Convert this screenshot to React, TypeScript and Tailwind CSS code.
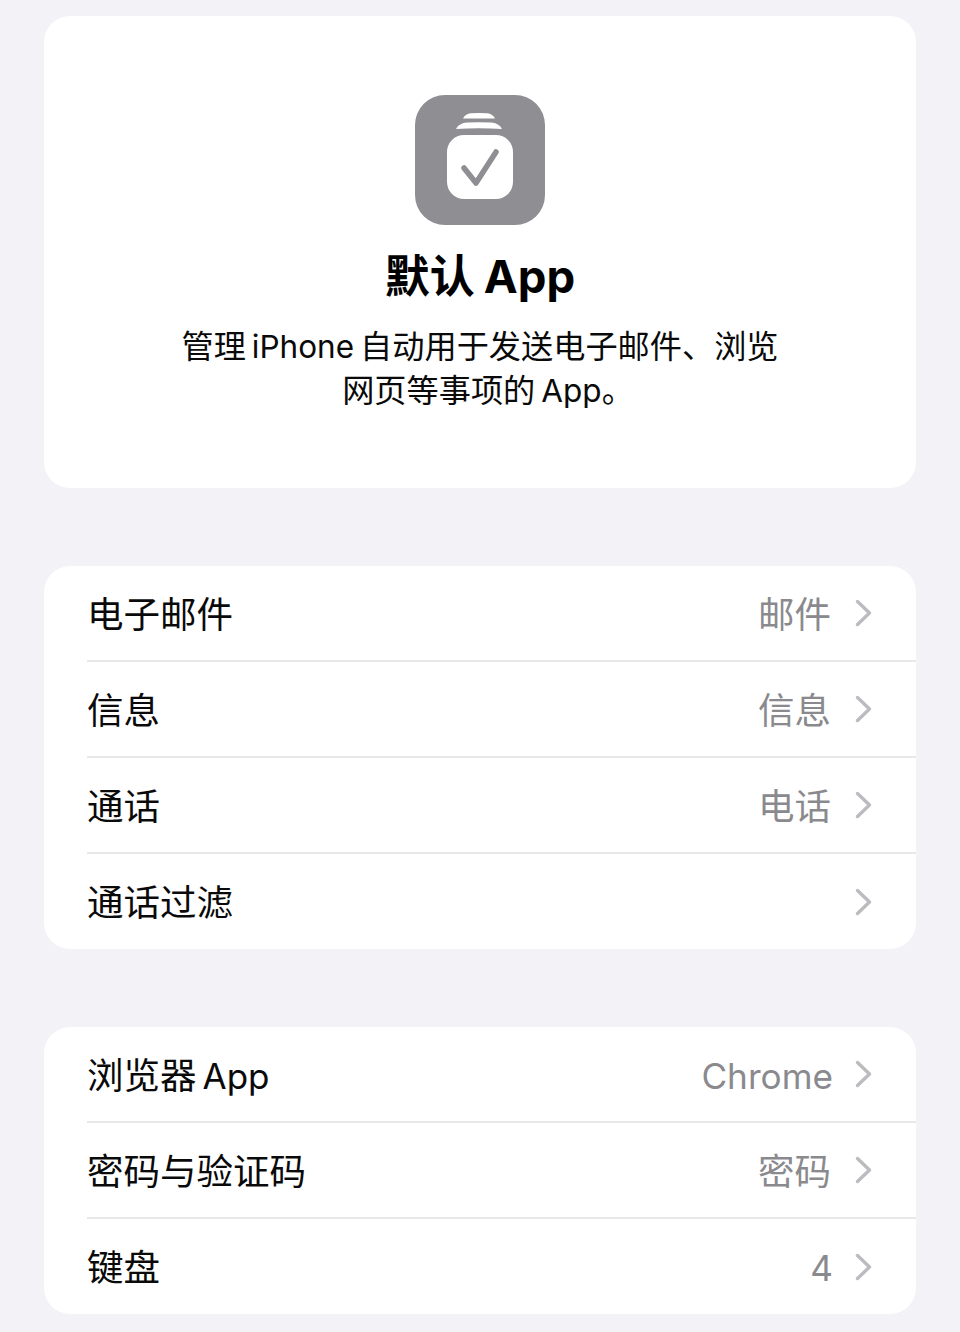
import React from 'react';

const font = { fontFamily: '"Inter", "Noto Sans CJK SC", sans-serif' };

interface RowProps {
  label: React.ReactNode;
  value?: React.ReactNode;
  last?: boolean;
}

function Chevron() {
  return (
    <svg width="18" height="28" viewBox="0 0 18 28" fill="none" className="ml-[24px] shrink-0">
      <path d="M2.5 2.5 L14.5 14 L2.5 25.5" stroke="#bcbcc0" strokeWidth="3.4" strokeLinecap="round" strokeLinejoin="round" />
    </svg>
  );
}

function Row({ label, value, last }: RowProps) {
  return (
    <div className={`flex items-stretch pl-[43px] ${last ? 'h-[95px]' : 'h-[96px]'}`}>
      <div className={`flex flex-1 items-center pr-[43px] ${last ? '' : 'border-b-2 border-[#e8e8ea]'}`}>
        <span className={`text-[36.5px] leading-[44px] text-[#0a0a0a] ${last ? 'mt-[2px]' : 'mt-[4px]'}`}>{label}</span>
        <span className={`ml-auto text-[36.5px] leading-[44px] text-[#8a8a8e] ${last ? 'mt-[2px]' : 'mt-[4px]'}`}>{value}</span>
        <Chevron />
      </div>
    </div>
  );
}

function AppIcon() {
  return (
    <svg width="132" height="132" viewBox="0 0 132 132">
      <rect x="1" y="1" width="130" height="130" rx="30" fill="#8e8e93" />
      <path d="M49 24.5 Q51 20 57 19.3 Q65 18.7 73 19.3 Q79 20 81 24.5 Z" fill="#fff" />
      <path d="M42 35 Q45 29 53 28.5 Q65 28 77 28.5 Q85 29 88 35 Q65 33.5 42 35 Z" fill="#fff" />
      <rect x="33" y="41" width="66" height="64" rx="17" fill="#fff" />
      <path d="M50 74 L62 89 L82 58" fill="none" stroke="#8e8e93" strokeWidth="5.5" strokeLinecap="round" strokeLinejoin="round" />
    </svg>
  );
}

export default function App() {
  return (
    <div className="h-[1332px] w-[960px] overflow-hidden bg-[#f2f2f7] px-[44px] pt-[16px]" style={font}>
      <div className="flex h-[472px] flex-col items-center rounded-[26px] bg-white pt-[78px]">
        <AppIcon />
        <h1 className="mt-[19px] text-[45px] font-bold leading-[64px] text-black">
          默认<span className="ml-[9px] text-[45.5px]">App</span>
        </h1>
        <p className="mt-[16px] text-center text-[32.2px] leading-[44px] text-[#0a0a0a]">
          管理<span className="mx-[6px] text-[31.5px]">iPhone</span>自动用于发送电子邮件、浏览
          <br />
          网页等事项的<span className="ml-[6px] text-[31.5px]">App</span>
          <span className="mr-[-16px]">。</span>
        </p>
      </div>

      <div className="mt-[78px] overflow-hidden rounded-[26px] bg-white">
        <Row label="电子邮件" value="邮件" />
        <Row label="信息" value="信息" />
        <Row label="通话" value="电话" />
        <Row label="通话过滤" last />
      </div>

      <div className="mt-[78px] overflow-hidden rounded-[26px] bg-white">
        <Row
          label={
            <>
              浏览器<span className="ml-[6px] text-[35px]">App</span>
            </>
          }
          value={<span className="mr-[-2px] text-[35.2px]">Chrome</span>}
        />
        <Row label="密码与验证码" value="密码" />
        <Row label="键盘" value={<span className="mr-[-2px] text-[35.2px]">4</span>} last />
      </div>
    </div>
  );
}
